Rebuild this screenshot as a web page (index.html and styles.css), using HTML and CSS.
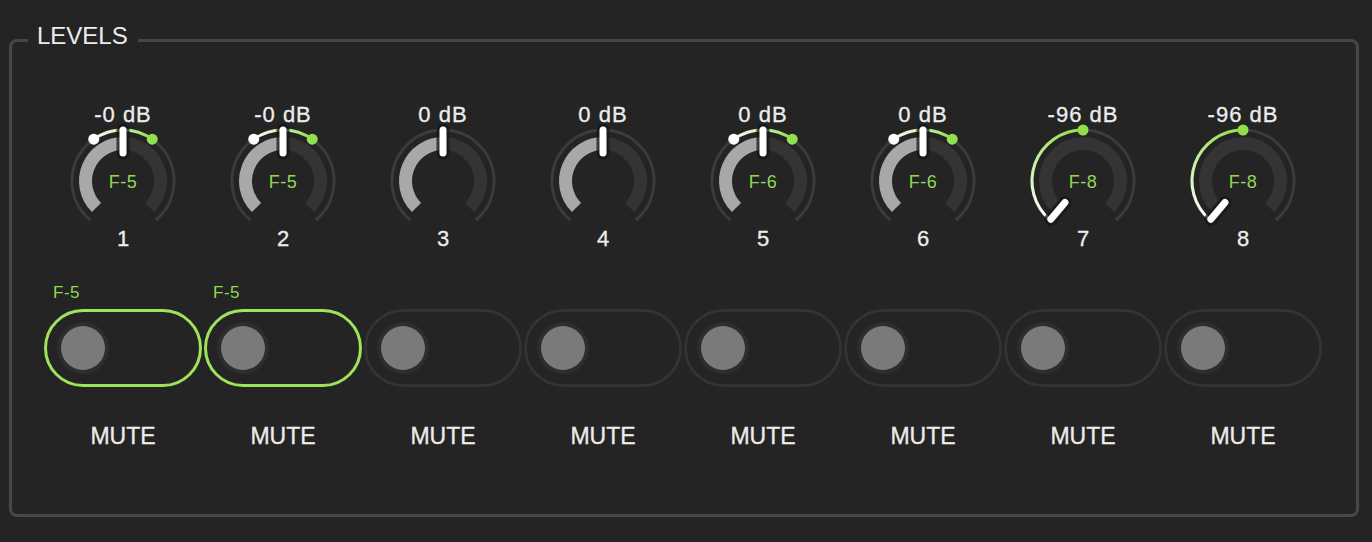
FILE: index.html
```html
<!DOCTYPE html>
<html lang="en">
<head>
    <meta charset="UTF-8">
    <meta name="viewport" content="width=device-width, initial-scale=1.0">
    <title>Levels</title>
    <link rel="stylesheet" href="styles.css">
</head>
<body>
    <fieldset class="levels">
        <legend>LEVELS</legend>
        <div class="strip-grid">
            <!-- Knob row -->
            <div class="knob-cell">
                <div class="db">-0 dB</div>
                <svg class="knob" viewBox="0 0 120 100" width="120" height="100">
                    <defs>
                        <linearGradient id="modSym" gradientUnits="userSpaceOnUse" x1="31" y1="14" x2="89" y2="14">
                            <stop offset="0" stop-color="#ffffff"/>
                            <stop offset="1" stop-color="#8fe04a"/>
                        </linearGradient>
                        <linearGradient id="modMin" gradientUnits="userSpaceOnUse" x1="27" y1="95" x2="60" y2="5">
                            <stop offset="0" stop-color="#ffffff"/>
                            <stop offset="1" stop-color="#8fe04a"/>
                        </linearGradient>
                    </defs>
                    <path class="ring" d="M27.22 95.07A51 51 0 1 1 92.78 95.07"/>
                    <path class="track" d="M60 18.5A37.5 37.5 0 0 1 86.52 82.52"/>
                    <path class="fill" d="M33.48 82.52A37.5 37.5 0 0 1 60 18.5"/>
                    <path class="mod" stroke="url(#modSym)" d="M30.75 14.22A51 51 0 0 1 89.25 14.22"/>
                    <circle class="dot-start" cx="30.75" cy="14.22" r="5.5"/>
                    <circle class="dot-end" cx="89.25" cy="14.22" r="5.5"/>
                    <path class="halo" d="M60 28V5"/>
                    <path class="pointer" d="M60 28V5"/>
                    <text class="assign" x="60" y="63">F-5</text>
                </svg>
                <div class="ch-num">1</div>
            </div>
            <div class="knob-cell">
                <div class="db">-0 dB</div>
                <svg class="knob" viewBox="0 0 120 100" width="120" height="100">
                    <path class="ring" d="M27.22 95.07A51 51 0 1 1 92.78 95.07"/>
                    <path class="track" d="M60 18.5A37.5 37.5 0 0 1 86.52 82.52"/>
                    <path class="fill" d="M33.48 82.52A37.5 37.5 0 0 1 60 18.5"/>
                    <path class="mod" stroke="url(#modSym)" d="M30.75 14.22A51 51 0 0 1 89.25 14.22"/>
                    <circle class="dot-start" cx="30.75" cy="14.22" r="5.5"/>
                    <circle class="dot-end" cx="89.25" cy="14.22" r="5.5"/>
                    <path class="halo" d="M60 28V5"/>
                    <path class="pointer" d="M60 28V5"/>
                    <text class="assign" x="60" y="63">F-5</text>
                </svg>
                <div class="ch-num">2</div>
            </div>
            <div class="knob-cell">
                <div class="db">0 dB</div>
                <svg class="knob" viewBox="0 0 120 100" width="120" height="100">
                    <path class="ring" d="M27.22 95.07A51 51 0 1 1 92.78 95.07"/>
                    <path class="track" d="M60 18.5A37.5 37.5 0 0 1 86.52 82.52"/>
                    <path class="fill" d="M33.48 82.52A37.5 37.5 0 0 1 60 18.5"/>
                    <path class="halo" d="M60 28V5"/>
                    <path class="pointer" d="M60 28V5"/>
                </svg>
                <div class="ch-num">3</div>
            </div>
            <div class="knob-cell">
                <div class="db">0 dB</div>
                <svg class="knob" viewBox="0 0 120 100" width="120" height="100">
                    <path class="ring" d="M27.22 95.07A51 51 0 1 1 92.78 95.07"/>
                    <path class="track" d="M60 18.5A37.5 37.5 0 0 1 86.52 82.52"/>
                    <path class="fill" d="M33.48 82.52A37.5 37.5 0 0 1 60 18.5"/>
                    <path class="halo" d="M60 28V5"/>
                    <path class="pointer" d="M60 28V5"/>
                </svg>
                <div class="ch-num">4</div>
            </div>
            <div class="knob-cell">
                <div class="db">0 dB</div>
                <svg class="knob" viewBox="0 0 120 100" width="120" height="100">
                    <path class="ring" d="M27.22 95.07A51 51 0 1 1 92.78 95.07"/>
                    <path class="track" d="M60 18.5A37.5 37.5 0 0 1 86.52 82.52"/>
                    <path class="fill" d="M33.48 82.52A37.5 37.5 0 0 1 60 18.5"/>
                    <path class="mod" stroke="url(#modSym)" d="M30.75 14.22A51 51 0 0 1 89.25 14.22"/>
                    <circle class="dot-start" cx="30.75" cy="14.22" r="5.5"/>
                    <circle class="dot-end" cx="89.25" cy="14.22" r="5.5"/>
                    <path class="halo" d="M60 28V5"/>
                    <path class="pointer" d="M60 28V5"/>
                    <text class="assign" x="60" y="63">F-6</text>
                </svg>
                <div class="ch-num">5</div>
            </div>
            <div class="knob-cell">
                <div class="db">0 dB</div>
                <svg class="knob" viewBox="0 0 120 100" width="120" height="100">
                    <path class="ring" d="M27.22 95.07A51 51 0 1 1 92.78 95.07"/>
                    <path class="track" d="M60 18.5A37.5 37.5 0 0 1 86.52 82.52"/>
                    <path class="fill" d="M33.48 82.52A37.5 37.5 0 0 1 60 18.5"/>
                    <path class="mod" stroke="url(#modSym)" d="M30.75 14.22A51 51 0 0 1 89.25 14.22"/>
                    <circle class="dot-start" cx="30.75" cy="14.22" r="5.5"/>
                    <circle class="dot-end" cx="89.25" cy="14.22" r="5.5"/>
                    <path class="halo" d="M60 28V5"/>
                    <path class="pointer" d="M60 28V5"/>
                    <text class="assign" x="60" y="63">F-6</text>
                </svg>
                <div class="ch-num">6</div>
            </div>
            <div class="knob-cell">
                <div class="db">-96 dB</div>
                <svg class="knob" viewBox="0 0 120 100" width="120" height="100">
                    <path class="ring" d="M27.22 95.07A51 51 0 1 1 92.78 95.07"/>
                    <path class="track" d="M33.48 82.52A37.5 37.5 0 1 1 86.52 82.52"/>
                    <path class="mod" stroke="url(#modMin)" d="M27.22 95.07A51 51 0 0 1 60 5"/>
                    <circle class="dot-end" cx="60" cy="5" r="5.5"/>
                    <path class="halo" d="M42 77.45L27.86 94.3"/>
                    <path class="pointer" d="M42 77.45L27.86 94.3"/>
                    <text class="assign" x="60" y="63">F-8</text>
                </svg>
                <div class="ch-num">7</div>
            </div>
            <div class="knob-cell">
                <div class="db">-96 dB</div>
                <svg class="knob" viewBox="0 0 120 100" width="120" height="100">
                    <path class="ring" d="M27.22 95.07A51 51 0 1 1 92.78 95.07"/>
                    <path class="track" d="M33.48 82.52A37.5 37.5 0 1 1 86.52 82.52"/>
                    <path class="mod" stroke="url(#modMin)" d="M27.22 95.07A51 51 0 0 1 60 5"/>
                    <circle class="dot-end" cx="60" cy="5" r="5.5"/>
                    <path class="halo" d="M42 77.45L27.86 94.3"/>
                    <path class="pointer" d="M42 77.45L27.86 94.3"/>
                    <text class="assign" x="60" y="63">F-8</text>
                </svg>
                <div class="ch-num">8</div>
            </div>

            <!-- Mute row -->
            <div class="mute-cell">
                <div class="assign-label">F-5</div>
                <div class="toggle on"><span class="thumb"></span></div>
                <div class="mute-label">MUTE</div>
            </div>
            <div class="mute-cell">
                <div class="assign-label">F-5</div>
                <div class="toggle on"><span class="thumb"></span></div>
                <div class="mute-label">MUTE</div>
            </div>
            <div class="mute-cell">
                <div class="assign-label"></div>
                <div class="toggle"><span class="thumb"></span></div>
                <div class="mute-label">MUTE</div>
            </div>
            <div class="mute-cell">
                <div class="assign-label"></div>
                <div class="toggle"><span class="thumb"></span></div>
                <div class="mute-label">MUTE</div>
            </div>
            <div class="mute-cell">
                <div class="assign-label"></div>
                <div class="toggle"><span class="thumb"></span></div>
                <div class="mute-label">MUTE</div>
            </div>
            <div class="mute-cell">
                <div class="assign-label"></div>
                <div class="toggle"><span class="thumb"></span></div>
                <div class="mute-label">MUTE</div>
            </div>
            <div class="mute-cell">
                <div class="assign-label"></div>
                <div class="toggle"><span class="thumb"></span></div>
                <div class="mute-label">MUTE</div>
            </div>
            <div class="mute-cell">
                <div class="assign-label"></div>
                <div class="toggle"><span class="thumb"></span></div>
                <div class="mute-label">MUTE</div>
            </div>
        </div>
    </fieldset>
</body>
</html>
```

FILE: styles.css
```css
/* Page */
body {
    margin: 0;
    padding: 24px 13px 0 9px;
    background-color: #242424;
    color: #ededed;
    font-family: "Liberation Sans", Arial, sans-serif;
}

/* Group frame */
.levels {
    margin: 0;
    padding: 0;
    min-width: 0;
    border: 3px solid #474747;
    border-radius: 8px;
}

.levels legend {
    margin-left: 16px;
    padding: 0 10px 8px 9px;
    font-size: 24px;
    line-height: 24px;
    color: #ededed;
}

/* Channel strips */
.strip-grid {
    display: grid;
    grid-template-columns: repeat(8, 160px);
    row-gap: 34px;
    padding: 49px 0 66px 31px;
}

.knob-cell,
.mute-cell {
    display: flex;
    flex-direction: column;
    align-items: center;
}

.db {
    font-size: 22px;
    line-height: 20px;
    letter-spacing: 1px;
    white-space: nowrap;
    -webkit-text-stroke: 0.3px #ededed;
}

.knob {
    display: block;
    overflow: visible;
}

.ch-num {
    margin-top: 4px;
    font-size: 22px;
    line-height: 20px;
    -webkit-text-stroke: 0.3px #ededed;
}

/* Knob parts */
.ring {
    fill: none;
    stroke: #3b3b3b;
    stroke-width: 3;
}

.track {
    fill: none;
    stroke: #343434;
    stroke-width: 13;
}

.fill {
    fill: none;
    stroke: #a8a8a8;
    stroke-width: 13;
}

.mod {
    fill: none;
    stroke-width: 3;
    stroke-linecap: round;
}

.dot-start {
    fill: #ffffff;
}

.dot-end {
    fill: #8fe04a;
}

.halo {
    fill: none;
    stroke: rgba(22, 22, 22, 0.75);
    stroke-width: 13;
    stroke-linecap: round;
}

.pointer {
    fill: none;
    stroke: #ffffff;
    stroke-width: 7;
    stroke-linecap: round;
}

.assign {
    fill: #8fd94f;
    font-family: "Liberation Sans", Arial, sans-serif;
    font-size: 18px;
    letter-spacing: 0.5px;
    text-anchor: middle;
}

/* Mute toggles */
.assign-label {
    box-sizing: border-box;
    width: 158px;
    height: 20px;
    margin-bottom: 6px;
    padding-left: 9px;
    font-size: 17px;
    line-height: 20px;
    letter-spacing: 0.5px;
    color: #8fd94f;
}

.toggle {
    box-sizing: border-box;
    width: 158px;
    height: 78px;
    border: 3px solid #333333;
    border-radius: 39px;
    display: flex;
    align-items: center;
    padding-left: 14px;
}

.toggle.on {
    border-color: #9ee35a;
}

.thumb {
    width: 44px;
    height: 44px;
    border-radius: 50%;
    background-color: #7a7a7a;
    box-shadow: 0 0 0 4px #2d2d2d;
}

.mute-label {
    margin-top: 37px;
    font-size: 23px;
    line-height: 24px;
    -webkit-text-stroke: 0.3px #ededed;
}
```
